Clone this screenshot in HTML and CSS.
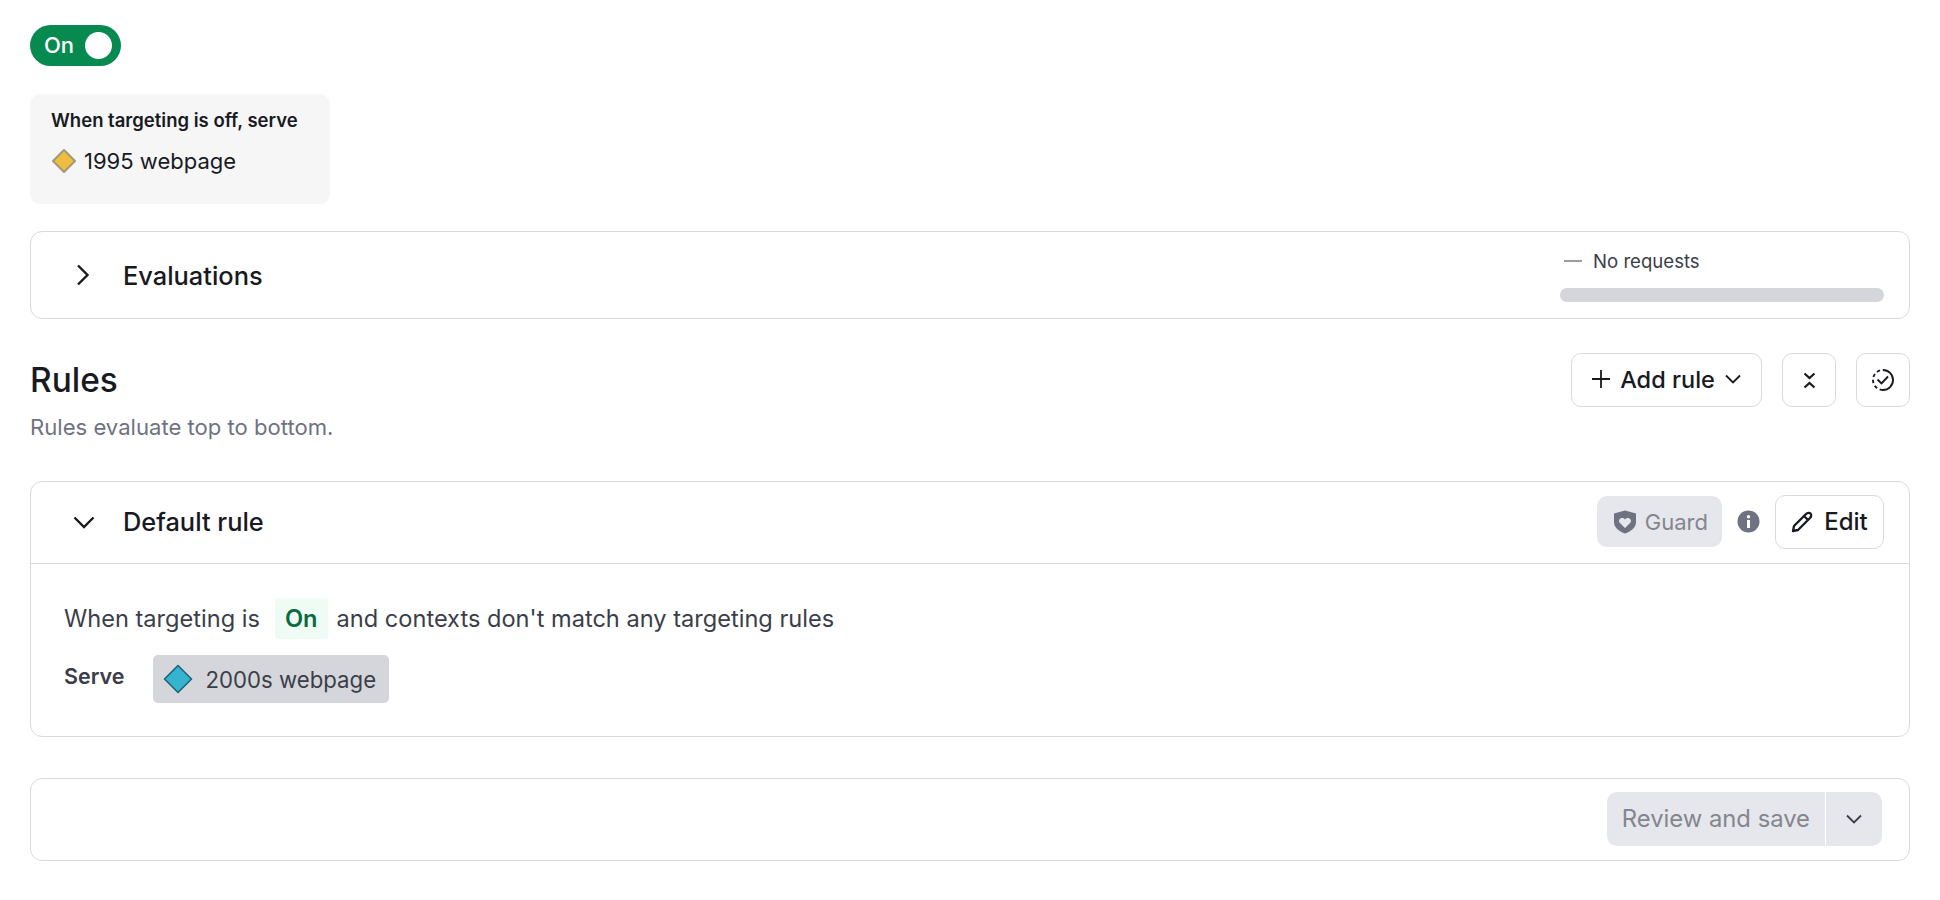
FILE: index.html
```html
<!DOCTYPE html>
<html lang="en">
<head>
  <meta charset="UTF-8">
  <meta name="viewport" content="width=device-width, initial-scale=1.0">
  <title>Targeting</title>
  <link rel="stylesheet" href="styles.css">
</head>
<body>
  <div class="toggle">
    <span class="toggle-label">On</span>
    <span class="toggle-knob"></span>
  </div>

  <div class="off-card">
    <div class="off-title">When targeting is off, serve</div>
    <div class="off-variation">
      <svg class="diamond-small" width="26" height="26" viewBox="0 0 26 26">
        <path d="M13 2 L24 13 L13 24 L2 13 Z" fill="#eebd3d" stroke="#a39a7c" stroke-width="2" stroke-linejoin="round"/>
      </svg>
      <span>1995 webpage</span>
    </div>
  </div>

  <div class="card eval-card">
    <svg class="chevron chevron-right" width="24" height="24" viewBox="0 0 24 24">
      <path d="M7 2.500 L16.500 12 L7 21.500" fill="none" stroke="#181a1f" stroke-width="2.400"/>
    </svg>
    <div class="card-title">Evaluations</div>
    <div class="eval-status">
      <div class="eval-text"><span class="dash"></span>No requests</div>
      <div class="eval-bar"></div>
    </div>
  </div>

  <div class="rules-head">
    <div>
      <h2>Rules</h2>
      <p>Rules evaluate top to bottom.</p>
    </div>
    <div class="rules-actions">
      <button class="btn add-btn">
        <svg width="20" height="20" viewBox="0 0 20 20"><path d="M10 1 V19 M1 10 H19" stroke="#181a1f" stroke-width="1.800" fill="none"/></svg>
        <span>Add rule</span>
        <svg width="18" height="18" viewBox="0 0 18 18"><path d="M2 5.500 L9 12.500 L16 5.500" stroke="#181a1f" stroke-width="1.800" fill="none"/></svg>
      </button>
      <button class="btn icon-btn">
        <svg width="13" height="17" viewBox="0 0 13 17"><path d="M1.500 1.500 L6.500 6 L11.500 1.500 M1.500 15.500 L6.500 11 L11.500 15.500" stroke="#181a1f" stroke-width="2.200" fill="none"/></svg>
      </button>
      <button class="btn icon-btn">
        <svg width="24" height="24" viewBox="0 0 24 24">
          <path d="M12 2 A10 10 0 1 1 12 22" stroke="#181a1f" stroke-width="1.900" fill="none"/>
          <path d="M12 22 A10 10 0 0 1 12 2" stroke="#181a1f" stroke-width="1.900" fill="none" stroke-dasharray="3.400 2.800"/>
          <path d="M6.500 11.500 L10.500 15.500 L17 8.500" stroke="#181a1f" stroke-width="1.900" fill="none"/>
        </svg>
      </button>
    </div>
  </div>

  <div class="card rule-card">
    <div class="rule-head">
      <svg class="chevron" width="24" height="24" viewBox="0 0 24 24">
        <path d="M2.500 7.500 L12 17 L21.500 7.500" fill="none" stroke="#181a1f" stroke-width="2.400"/>
      </svg>
      <div class="card-title">Default rule</div>
      <div class="guard">
        <svg width="22" height="24" viewBox="0 0 22 24">
          <path d="M11 0.500 L22 3.500 V12 C22 18 16.500 21.500 11 23.500 C5.500 21.500 0 18 0 12 V3.500 Z" fill="#6f7280"/>
          <path d="M11 18 L5.500 12.500 C3.500 9.500 8 6 11 9.500 C14 6 18.500 9.500 16.500 12.500 Z" fill="#e6e7ec"/>
        </svg>
        <span>Guard</span>
      </div>
      <svg class="info" width="23" height="23" viewBox="0 0 23 23">
        <circle cx="11.500" cy="11.500" r="11" fill="#6f7280"/>
        <rect x="10" y="10" width="3" height="8" fill="#fff"/>
        <circle cx="11.500" cy="6.800" r="1.700" fill="#fff"/>
      </svg>
      <button class="btn edit-btn">
        <svg width="22" height="22" viewBox="0 0 22 22">
          <path d="M2 20 L3 15 L15 3 C16.500 1.500 18.500 1.500 19.500 2.500 C20.500 3.500 20.500 5.500 19 7 L7 19 Z M13 5 L17 9" fill="none" stroke="#181a1f" stroke-width="2.300" stroke-linejoin="round"/>
        </svg>
        <span>Edit</span>
      </button>
    </div>
    <div class="rule-body">
      <div class="rule-line">
        <span>When targeting is</span>
        <span class="on-tag">On</span>
        <span>and contexts don't match any targeting rules</span>
      </div>
      <div class="serve-line">
        <span class="serve-label">Serve</span>
        <div class="serve-value">
          <svg width="30" height="30" viewBox="0 0 30 30">
            <path d="M15 1.500 L28.500 15 L15 28.500 L1.500 15 Z" fill="#35b3cf" stroke="#1d6478" stroke-width="1.600" stroke-linejoin="round"/>
          </svg>
          <span>2000s webpage</span>
        </div>
      </div>
    </div>
  </div>

  <div class="card save-card">
    <div class="save-group">
      <div class="save-btn">Review and save</div>
      <div class="save-caret">
        <svg width="18" height="18" viewBox="0 0 18 18"><path d="M2 5.500 L9 12.500 L16 5.500" stroke="#3b3e49" stroke-width="1.800" fill="none"/></svg>
      </div>
    </div>
  </div>
</body>
</html>
```

FILE: styles.css
```css
* {
  box-sizing: border-box;
}
body {
  font-family: Inter, "Liberation Sans", sans-serif;
  background-color: #fff;
  color: #181a1f;
  margin: 0;
  padding: 25px 30px 0;
}
svg {
  display: block;
  flex-shrink: 0;
}
.toggle {
  display: flex;
  align-items: center;
  justify-content: space-between;
  width: 91px;
  height: 41px;
  padding: 0 9px 2px 14px;
  background-color: #078a50;
  border-radius: 21px;
}
.toggle-label {
  color: #fff;
  font-size: 22px;
  font-weight: 500;
}
.toggle-knob {
  width: 27px;
  height: 27px;
  margin-top: 2px;
  border-radius: 50%;
  background-color: #fff;
}
.off-card {
  width: 300px;
  height: 110px;
  margin-top: 28px;
  padding: 14px 21px;
  background-color: #f6f6f7;
  border-radius: 10px;
}
.off-title {
  font-size: 18.500px;
  font-weight: 600;
  line-height: 24px;
}
.off-variation {
  display: flex;
  align-items: center;
  gap: 7px;
  margin-top: 14px;
  font-size: 22px;
  line-height: 30px;
}
.card {
  border: 1px solid #d9dade;
  border-radius: 12px;
  background-color: #fff;
}
.eval-card {
  display: flex;
  align-items: center;
  height: 88px;
  margin-top: 27px;
  padding: 0 25px 0 41px;
}
.chevron-right {
  margin-left: -1px;
  margin-right: 1px;
}
.card-title {
  margin-left: 27px;
  font-size: 25.400px;
  font-weight: 450;
}
.eval-status {
  width: 324px;
  margin-left: auto;
  padding-top: 1px;
}
.eval-text {
  display: flex;
  align-items: center;
  padding-left: 4px;
  font-size: 18.600px;
  line-height: 24px;
  color: #3b3e49;
}
.dash {
  width: 18px;
  height: 2px;
  margin-right: 11px;
  background-color: #9a9ca6;
}
.eval-bar {
  height: 14px;
  margin-top: 15px;
  background-color: #d5d6db;
  border-radius: 7px;
}
.rules-head {
  display: flex;
  justify-content: space-between;
  align-items: flex-start;
  margin-top: 34px;
}
.rules-head h2 {
  margin: 0;
  padding-top: 1px;
  font-size: 33.400px;
  font-weight: 450;
  line-height: 52px;
}
.rules-head p {
  margin: 7px 0 0;
  font-size: 22.100px;
  line-height: 28px;
  color: #6f7280;
}
.rules-actions {
  display: flex;
  gap: 20px;
}
.btn {
  display: flex;
  align-items: center;
  justify-content: center;
  height: 54px;
  padding: 0;
  font-family: inherit;
  font-size: 24px;
  font-weight: 450;
  color: #181a1f;
  background-color: #fff;
  border: 1px solid #d9dade;
  border-radius: 10px;
}
.add-btn {
  width: 191px;
  gap: 9px;
  padding-bottom: 2px;
  font-size: 23.500px;
}
.icon-btn {
  width: 54px;
}
.rule-card {
  height: 256px;
  margin-top: 40px;
}
.rule-head {
  display: flex;
  align-items: center;
  height: 82px;
  padding: 0 25px 2px 41px;
  border-bottom: 1px solid #d9dade;
}
.guard {
  display: flex;
  align-items: center;
  gap: 9px;
  height: 51px;
  margin-left: auto;
  padding: 0 14px 0 17px;
  font-size: 22px;
  color: #84868f;
  background-color: #e6e7ec;
  border-radius: 10px;
}
.info {
  margin-left: 15px;
}
.edit-btn {
  width: 109px;
  margin-left: 15px;
  gap: 11px;
}
.rule-body {
  padding: 34px 33px;
}
.rule-line {
  display: flex;
  align-items: center;
  gap: 15px;
  font-size: 23.600px;
  color: #3b3e49;
}
.on-tag {
  margin-right: -6px;
  padding: 6px 10px;
  font-weight: 600;
  color: #0a6b3f;
  background-color: #effbf5;
  border-radius: 3px;
}
.serve-line {
  display: flex;
  align-items: center;
  gap: 28px;
  margin-top: 16px;
}
.serve-label {
  padding-bottom: 6px;
  font-size: 21.500px;
  font-weight: 600;
  color: #3b3e49;
}
.serve-value {
  display: flex;
  align-items: center;
  gap: 13px;
  height: 48px;
  padding: 0 13px 0 10px;
  font-size: 22.200px;
  color: #3b3e49;
  background-color: #d5d6db;
  border-radius: 5px;
}
.save-card {
  display: flex;
  justify-content: flex-end;
  align-items: center;
  height: 83px;
  margin-top: 41px;
  padding: 0 27px 2px 0;
}
.save-group {
  display: flex;
  gap: 1px;
  height: 54px;
}
.save-btn {
  display: flex;
  align-items: center;
  padding: 0 15px;
  font-size: 23.800px;
  color: #84868f;
  background-color: #e6e7ec;
  border-radius: 10px 0 0 10px;
}
.save-caret {
  display: flex;
  align-items: center;
  justify-content: center;
  width: 56px;
  background-color: #e6e7ec;
  border-radius: 0 10px 10px 0;
}
```
